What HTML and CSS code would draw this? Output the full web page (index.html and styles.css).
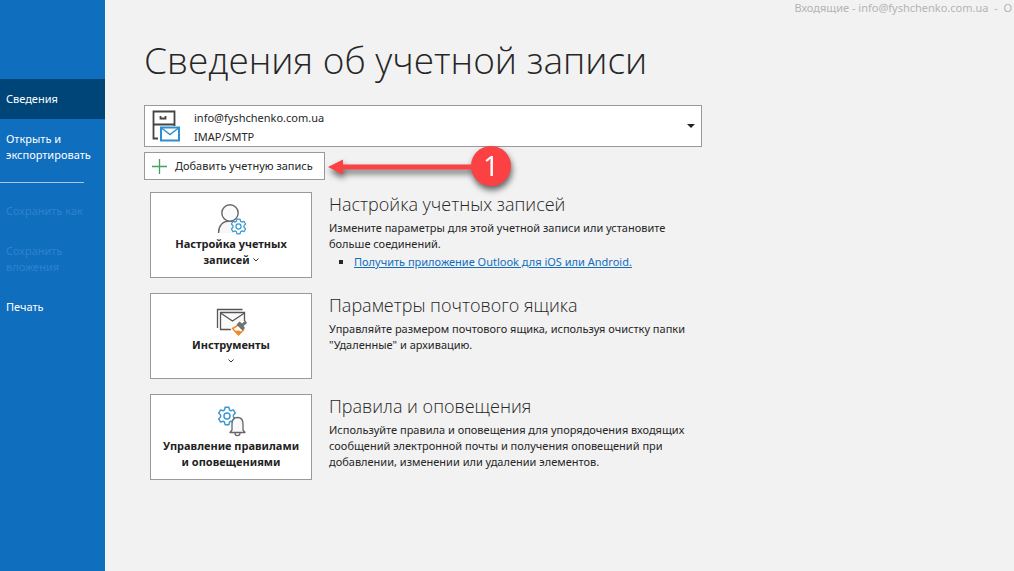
FILE: index.html
```html
<!DOCTYPE html>
<html lang="ru">
<head>
<meta charset="utf-8">
<meta name="viewport" content="width=device-width, initial-scale=1">
<title>Сведения об учетной записи</title>
<link rel="stylesheet" href="styles.css">
</head>
<body>
<svg class="defs" aria-hidden="true">
  <symbol id="gear" viewBox="0 0 18 18">
    <path d="M7.3 1.2h3.4l.5 2.3 1.3.8 2.3-.8 1.7 2.9-1.7 1.7v1.8l1.7 1.7-1.7 2.9-2.3-.8-1.3.8-.5 2.3H7.3l-.5-2.3-1.3-.8-2.3.8-1.7-2.9 1.7-1.7V8.100L1.500 6.400l1.700-2.900 2.300.8 1.300-.8z" fill="#fff" stroke="#3a96d4" stroke-width="1.300" stroke-linejoin="round"/>
    <circle cx="9" cy="9" r="2.700" fill="none" stroke="#3a96d4" stroke-width="1.300"/>
  </symbol>
</svg>
<div class="app">
  <nav class="sidebar">
    <button class="nav-item active" type="button">Сведения</button>
    <button class="nav-item" type="button">Открыть и<br>экспортировать</button>
    <hr class="nav-line">
    <button class="nav-item" type="button" disabled>Сохранить как</button>
    <button class="nav-item" type="button" disabled>Сохранить<br>вложения</button>
    <button class="nav-item" type="button">Печать</button>
  </nav>
  <main class="main">
    <div class="window-title">Входящие - info@fyshchenko.com.ua&nbsp; -&nbsp; O</div>
    <h1 class="title">Сведения об учетной записи</h1>

    <div class="account">
      <select class="account-select" aria-label="Учетная запись">
        <option>info@fyshchenko.com.ua</option>
      </select>
      <svg class="account-icon" width="30" height="32" viewBox="0 0 30 32" aria-hidden="true">
        <path d="M7 28.500H2.500V1.500h21V16M2.500 14.500h21M9.500 6v2.500h5V6" fill="none" stroke="#444" stroke-width="1.800"/>
        <path d="M10 17.500h18v13H10z" fill="#fff" stroke="#2f8fd3" stroke-width="2"/>
        <path d="M10.500 18l8.500 6.500L27.500 18" fill="none" stroke="#2f8fd3" stroke-width="1.500"/>
      </svg>
      <span class="account-type">IMAP/SMTP</span>
      <svg class="account-arrow" width="8" height="4" viewBox="0 0 8 4" aria-hidden="true"><path d="M0 0h8L4 4z" fill="#222"/></svg>
    </div>

    <div class="add-row">
      <button class="add-button" type="button">
        <svg width="15" height="15" viewBox="0 0 15 15" aria-hidden="true"><path d="M7.500 0v15M0 7.500h15" stroke="#3fa35c" stroke-width="1.300"/></svg>
        Добавить учетную запись
      </button>
      <svg class="callout" width="190" height="52" viewBox="0 0 190 52" role="img" aria-label="Шаг 1">
        <path d="M1 24l15-7.500V21.500h134v5H16V31.500z" fill="#fc4145"/>
        <circle cx="164" cy="23" r="20" fill="#fc4145"/>
        <text class="callout-text" x="164" y="33" text-anchor="middle">1</text>
      </svg>
    </div>

    <section class="row">
      <button class="tile" type="button">
        <svg class="tile-icon" width="32" height="32" viewBox="0 0 32 32" aria-hidden="true">
          <path d="M4 29c0-7 4-12 11-12 4 0 6 1 8 3v6l-4 3z" fill="#f7f7f7"/>
          <path d="M3.500 29c0-7 4-12 11-12 3 0 5 .7 7 2" fill="none" stroke="#666" stroke-width="1.400"/>
          <circle cx="15" cy="9" r="8.200" fill="#fafafa" stroke="#666" stroke-width="1.400"/>
          <use href="#gear" x="15" y="14" width="17" height="17"/>
        </svg>
        <span>Настройка учетных<br>записей <svg class="chevron" width="6" height="4" viewBox="0 0 6 4" aria-hidden="true"><path d="M.5.5L3 3 5.500.5"/></svg></span>
      </button>
      <div class="info">
        <h2 class="info-title">Настройка учетных записей</h2>
        <p class="info-text">Измените параметры для этой учетной записи или установите<br>больше соединений.</p>
        <ul class="links">
          <li><a class="link" href="#outlook-mobile">Получить приложение Outlook для iOS или Android.</a></li>
        </ul>
      </div>
    </section>

    <section class="row">
      <button class="tile" type="button">
        <svg class="tile-icon" width="32" height="32" viewBox="0 0 32 32" aria-hidden="true">
          <path d="M2.500 23V4.500h25" fill="none" stroke="#555" stroke-width="1.300"/>
          <path d="M16 24.500H5.500v-17h24V16" fill="#fafafa" stroke="#555" stroke-width="1.300"/>
          <path d="M5.500 8l12 8 12-8" fill="none" stroke="#555" stroke-width="1.300"/>
          <path d="M15 23.500l8-6 8 5-7.500 8.500z" fill="#fff"/>
          <path d="M17.500 23.500l6-3.500 5 5-5 5z" fill="#fff" stroke="#ee8a2a" stroke-width="1.500"/>
          <path d="M19 26l5-.5 3 1.500-3.500 3z" fill="#ee8a2a"/>
          <path d="M21.500 19.500l3-3 2.500 2 3.500-3 1.500 2.500-3.500 3 1.500 2-2.500 2.500z" fill="#707070"/>
        </svg>
        <span>Инструменты<br><svg class="chevron" width="6" height="4" viewBox="0 0 6 4" aria-hidden="true"><path d="M.5.5L3 3 5.500.5"/></svg></span>
      </button>
      <div class="info">
        <h2 class="info-title">Параметры почтового ящика</h2>
        <p class="info-text">Управляйте размером почтового ящика, используя очистку папки<br>"Удаленные" и архивацию.</p>
      </div>
    </section>

    <section class="row">
      <button class="tile" type="button">
        <svg class="tile-icon" width="32" height="32" viewBox="0 0 32 32" aria-hidden="true">
          <use href="#gear" x="2" y="0" width="20" height="20"/>
          <path d="M15 26.500l2-2.500v-6c0-4 2-6.500 5.500-6.500s5.500 2.500 5.500 6.500v6l2 2.500z" fill="#fafafa" stroke="#666" stroke-width="1.300" stroke-linejoin="round"/>
          <path d="M20 27c0 3.500 5 3.500 5 0" fill="none" stroke="#666" stroke-width="1.300"/>
        </svg>
        <span>Управление правилами<br>и оповещениями</span>
      </button>
      <div class="info">
        <h2 class="info-title">Правила и оповещения</h2>
        <p class="info-text">Используйте правила и оповещения для упорядочения входящих<br>сообщений электронной почты и получения оповещений при<br>добавлении, изменении или удалении элементов.</p>
      </div>
    </section>
  </main>
</div>
</body>
</html>
```
FILE: styles.css
```css
* {
  box-sizing: border-box;
}

body {
  margin: 0;
  background: #f2f2f2;
  color: #262626;
  font: 11px/16px "Noto Sans", "Open Sans", sans-serif;
}

button,
select {
  margin: 0;
  border: 0;
  font: inherit;
  color: inherit;
}

.defs {
  display: none;
}

.app {
  display: flex;
  min-height: 100vh;
}

.sidebar {
  display: flex;
  flex: 0 0 105px;
  flex-direction: column;
  padding-top: 79px;
  background: #106ebe;
}

.nav-item {
  padding: 12px 6px;
  background: none;
  color: #fff;
  text-align: left;
  white-space: nowrap;
}

.nav-item.active {
  background: #004578;
}

.nav-item:disabled {
  color: #2b83cf;
}

.nav-line {
  width: 84px;
  height: 1px;
  margin: 7px 0 8px;
  border: 0;
  background: #a3c9e8;
}

.main {
  flex: 1;
  min-width: 0;
  padding-left: 39px;
}

.window-title {
  padding-right: 2px;
  color: #b4b4b4;
  text-align: right;
  white-space: nowrap;
}

.title {
  margin: 16px 0 17px;
  color: #262626;
  font-family: "Open Sans", "Noto Sans", sans-serif;
  font-size: 37px;
  font-weight: 300;
  line-height: 56px;
}

.account {
  display: grid;
  grid-template: 21px 19px / 49px 1fr 14px;
  align-items: center;
  max-width: 558px;
  border: 1px solid #999;
  background: #fff;
}

.account-select {
  grid-area: 1 / 1 / 3 / 4;
  height: 40px;
  padding: 0 20px 16px 49px;
  background: transparent;
  appearance: none;
}

.account-icon {
  grid-area: 1 / 1 / 3 / 2;
  margin-left: 6px;
  pointer-events: none;
}

.account-type {
  grid-area: 2 / 2;
  pointer-events: none;
}

.account-arrow {
  grid-area: 1 / 3 / 3 / 4;
  justify-self: start;
  pointer-events: none;
}

.add-row {
  position: relative;
  margin: 5px 0 12px;
}

.add-button {
  display: flex;
  align-items: center;
  gap: 8px;
  height: 28px;
  padding: 0 11px 0 7px;
  border: 1px solid #999;
  background: #fff;
}

.callout {
  position: absolute;
  top: -9px;
  left: 183px;
  overflow: visible;
  filter: drop-shadow(1px 4px 3px rgba(0, 0, 0, 0.6));
}

.callout-text {
  fill: #fff;
  font-size: 28px;
}

.row {
  display: flex;
  gap: 17px;
  margin: 0 0 15px 6px;
}

.tile {
  display: flex;
  flex: 0 0 162px;
  flex-direction: column;
  align-items: center;
  height: 86px;
  padding: 11px 0 0;
  border: 1px solid #999;
  background: #fff;
  color: #222;
  font-weight: 700;
  white-space: nowrap;
}

.chevron {
  vertical-align: 2px;
  fill: none;
  stroke: #333;
}

.info-title {
  margin: 0 0 4px;
  color: #262626;
  font-family: "Open Sans", "Noto Sans", sans-serif;
  font-size: 18px;
  font-weight: 300;
  line-height: 24px;
}

.info-text {
  margin: 0;
}

.links {
  margin: 2px 0 0;
  padding-left: 25px;
  list-style: square;
}

.link {
  color: #106ebe;
}
```
